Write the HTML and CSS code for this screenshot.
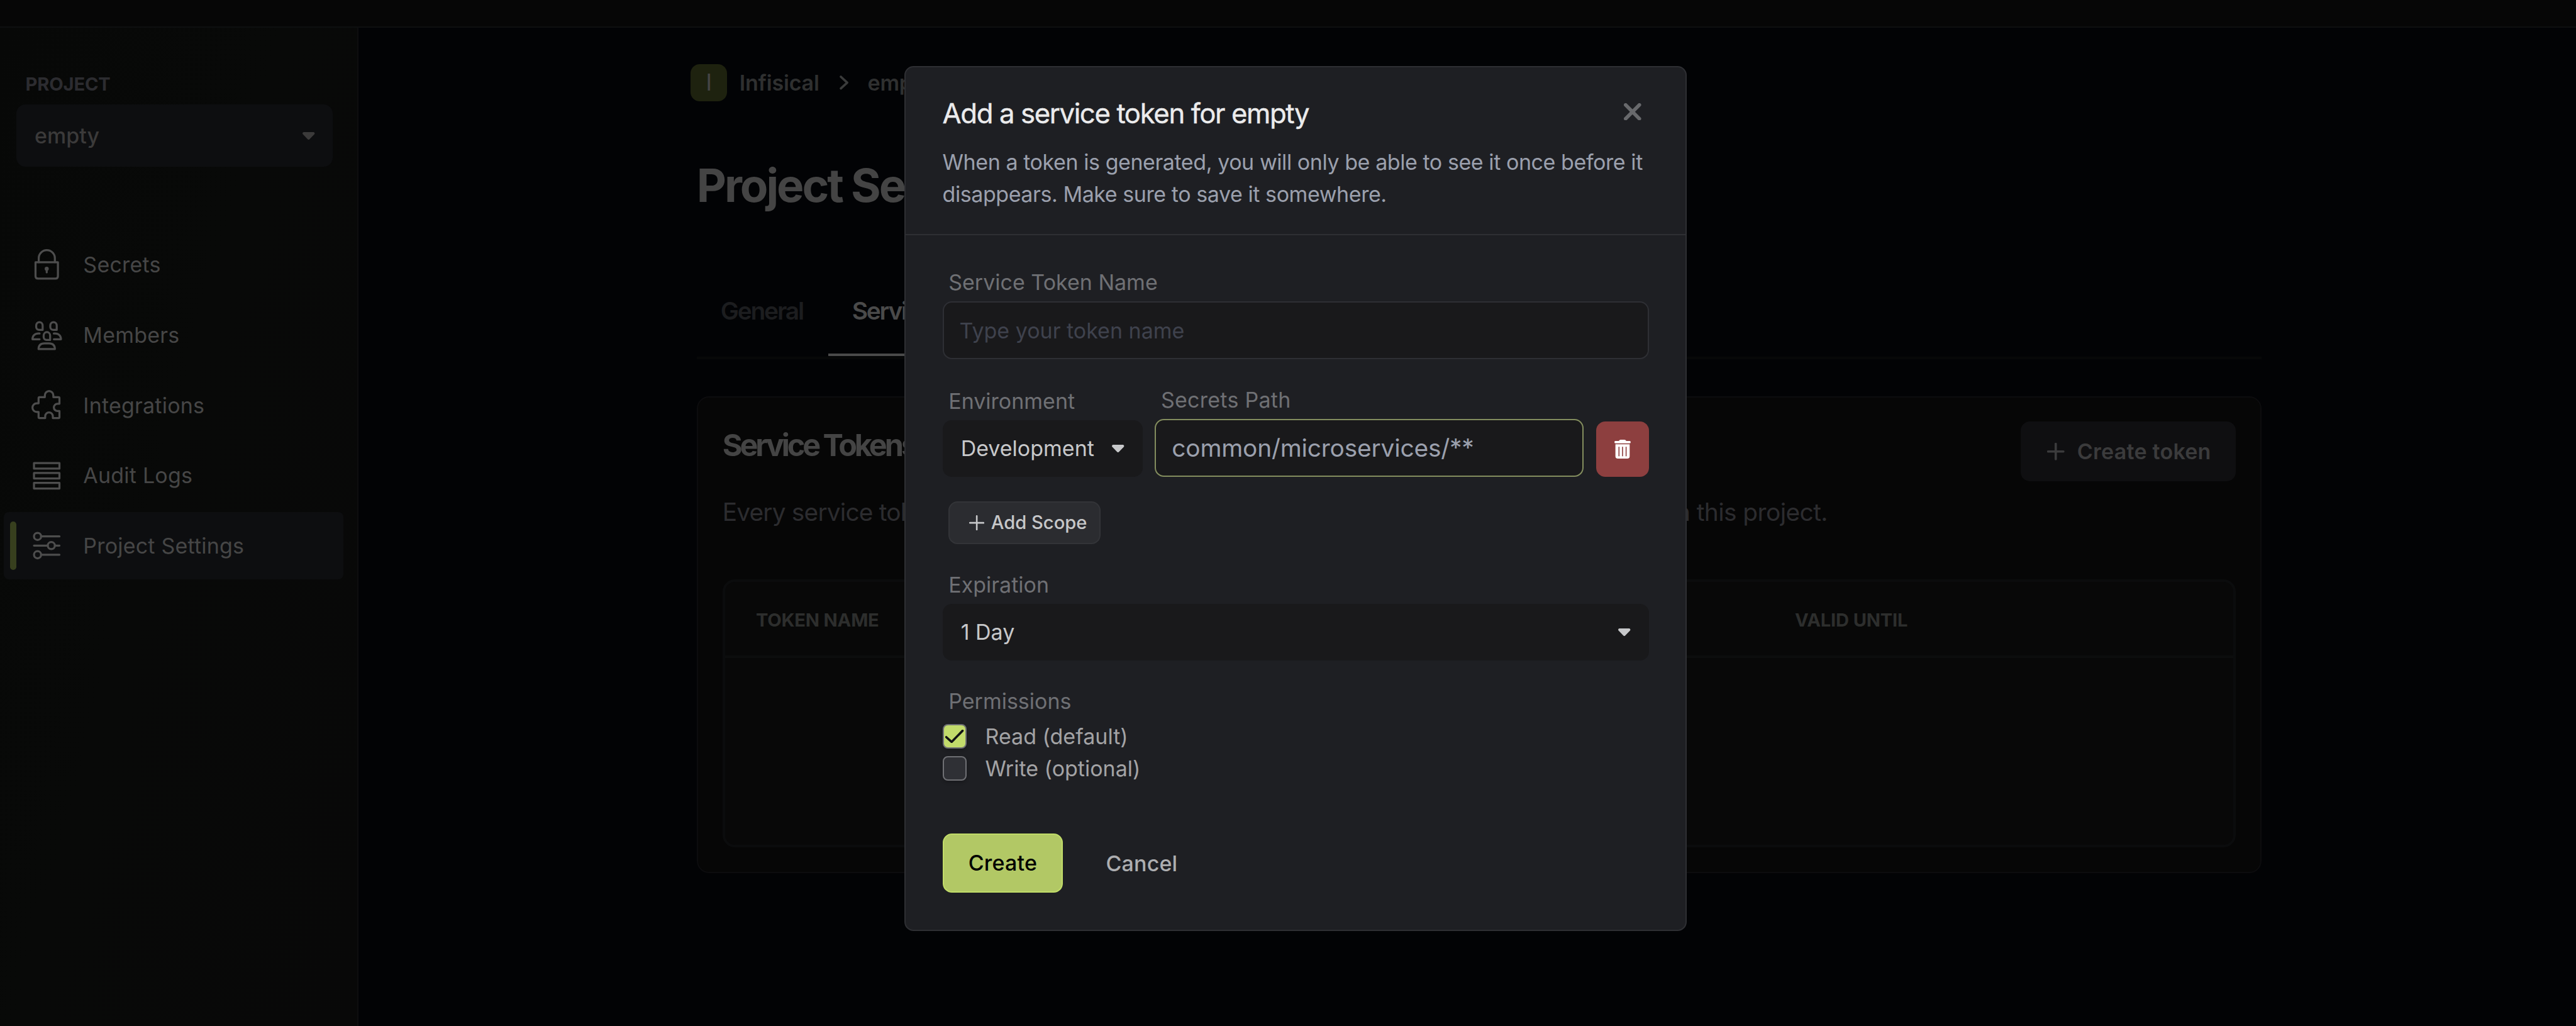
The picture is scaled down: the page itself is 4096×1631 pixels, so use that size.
FILE: index.html
```html
<!DOCTYPE html>
<html lang="en">
<head>
<meta charset="utf-8">
<title>Project Settings</title>
<link rel="stylesheet" href="styles.css">
</head>
<body>
<div class="app">
  <header class="topbar"></header>
  <div class="shell">
    <aside class="sidebar">
      <div class="sidebar-label">PROJECT</div>
      <div class="project-select">
        <span>empty</span>
        <svg class="caret" viewBox="0 0 24 15"><path d="M2.2 0h19.6q2.2.4 2.2 2.6 0 1-.8 1.8l-9.6 9.8q-1.6 1.5-3.2 0L.8 4.400Q0 3.600 0 2.600 0 .4 2.200 0z"/></svg>
      </div>
      <nav class="menu">
        <a class="menu-item">
          <svg class="menu-icon" viewBox="0 0 180 180"><path d="M24 77h132v82q0 15-15 15H39q-15 0-15-15z"/><path d="M43 77V53.500a47.500 47.500 0 0 1 95 0V77"/><path d="M90 118v19"/><circle class="solid" cx="90" cy="116" r="6"/></svg>
          <span>Secrets</span>
        </a>
        <a class="menu-item">
          <svg class="menu-icon" viewBox="0 0 180 180"><path d="M28 36a19 21 0 0 1 38 0v25H45a17 17 0 0 1-17-17z"/><path d="M111 36a19 21 0 0 1 38 0v25h-21a17 17 0 0 1-17-17z"/><path d="M72 95a19 21 0 0 1 38 0v25H89a17 17 0 0 1-17-17z"/><path d="M48 82h-8C20 82 6 96 6 116h42"/><path d="M132 82h8c20 0 34 14 34 34h-42"/><path d="M42 174c0-22 12-34 34-34h28c22 0 34 12 34 34z"/></svg>
          <span>Members</span>
        </a>
        <a class="menu-item">
          <svg class="menu-icon" viewBox="0 0 180 180"><path d="M42 78V48q0-6 6-6h31V31.500a25 25.500 0 0 1 50 0V42h30q6 0 6 6v33h-11a22 21.500 0 0 0 0 43h11v35q0 6-6 6h-33v-10.500a22.500 22.500 0 0 0-45 0V165H48q-6 0-6-6v-30H31.500a25.500 25.500 0 0 1 0-51z"/></svg>
          <span>Integrations</span>
        </a>
        <a class="menu-item">
          <svg class="menu-icon" viewBox="0 0 180 180"><path d="M15 15h150v33H15zM15 74h150v32H15zM15 132h150v33H15z"/></svg>
          <span>Audit Logs</span>
        </a>
        <a class="menu-item active">
          <svg class="menu-icon" viewBox="0 0 180 180"><circle cx="36" cy="36" r="21"/><path d="M57 36h108M15 90h81M138 90h27M57 144h108"/><circle cx="117" cy="90" r="21"/><circle cx="36" cy="144" r="21"/></svg>
          <span>Project Settings</span>
        </a>
      </nav>
    </aside>
    <main class="content">
      <div class="breadcrumb">
        <span class="org-badge">I</span>
        <span class="crumb">Infisical</span>
        <svg class="crumb-arrow" viewBox="0 0 18 28"><path d="M2.500 2.500 15 14 2.500 25.500"/></svg>
        <span class="crumb">empty</span>
      </div>
      <h1 class="page-title">Project Settings</h1>
      <div class="tabs">
        <span class="tab">General</span>
        <span class="tab selected">Service Tokens</span>
      </div>
      <section class="card">
        <div class="card-head">
          <h2 class="card-title">Service Tokens</h2>
          <div class="create-token">
            <svg class="plus-lg" viewBox="0 0 34 34"><path d="M17 2v30M2 17h30"/></svg>
            <span>Create token</span>
          </div>
        </div>
        <p class="card-text"><span class="tight">Every service token</span><span>in this project.</span></p>
        <div class="table">
          <div class="table-head">
            <span class="col-name">TOKEN NAME</span>
            <span>VALID UNTIL</span>
          </div>
        </div>
      </section>
    </main>
  </div>
</div>

<div class="modal" role="dialog">
  <div class="modal-head">
    <div class="modal-title-row">
      <h3 class="modal-title">Add a service token for empty</h3>
      <svg class="close" viewBox="0 0 34 34"><path d="M3.500 3.500l27 27M30.500 3.500l-27 27"/></svg>
    </div>
    <p class="modal-text">When a token is generated, you will only be able to see it once before it<br>disappears. Make sure to save it somewhere.</p>
  </div>
  <div class="modal-body">
    <div class="field">
      <label class="label">Service Token Name</label>
      <div class="input placeholder">Type your token name</div>
    </div>
    <div class="scope-row">
      <div class="field env">
        <label class="label">Environment</label>
        <div class="select">
          <span>Development</span>
          <svg class="caret" viewBox="0 0 24 15"><path d="M2.2 0h19.6q2.2.4 2.2 2.6 0 1-.8 1.8l-9.6 9.8q-1.6 1.5-3.2 0L.8 4.400Q0 3.600 0 2.600 0 .4 2.200 0z"/></svg>
        </div>
      </div>
      <div class="field path">
        <label class="label">Secrets Path</label>
        <div class="input focused">common/microservices/**</div>
      </div>
      <div class="trash">
        <svg class="trash-icon" viewBox="0 0 96 111"><path d="M6 7h20q4-7 11-7h22q7 0 11 7h20q6 0 6 7t-6 7H6q-6 0-6-7t6-7z"/><path fill-rule="evenodd" d="M6 27h84v70q0 14-14 14H20Q6 111 6 97zM24 44v51q0 3 3 3t3-3V44q0-3-3-3t-3 3zM45 44v51q0 3 3 3t3-3V44q0-3-3-3t-3 3zM66 44v51q0 3 3 3t3-3V44q0-3-3-3t-3 3z"/></svg>
      </div>
    </div>
    <div class="add-scope">
      <svg class="plus-sm" viewBox="0 0 30 30"><path d="M15 1.500v27M1.500 15h27"/></svg>
      <span>Add Scope</span>
    </div>
    <div class="field expiration">
      <label class="label">Expiration</label>
      <div class="select">
        <span>1 Day</span>
        <svg class="caret" viewBox="0 0 24 15"><path d="M2.2 0h19.6q2.2.4 2.2 2.6 0 1-.8 1.8l-9.6 9.8q-1.6 1.5-3.2 0L.8 4.400Q0 3.600 0 2.600 0 .4 2.200 0z"/></svg>
      </div>
    </div>
    <div class="field permissions">
      <label class="label">Permissions</label>
      <div class="check-row">
        <span class="checkbox checked"><svg viewBox="0 0 36 26"><path d="M2 14.500 12.500 24 34 2"/></svg></span>
        <span>Read (default)</span>
      </div>
      <div class="check-row">
        <span class="checkbox"></span>
        <span>Write (optional)</span>
      </div>
    </div>
    <div class="actions">
      <div class="btn-create">Create</div>
      <div class="btn-cancel">Cancel</div>
    </div>
  </div>
</div>
</body>
</html>
```
FILE: styles.css
```css
* {
  box-sizing: border-box;
}

html {
  font-size: 80.981px;
}

body {
  margin: 0;
  width: 100vw;
  height: 100vh;
  overflow: hidden;
  position: relative;
  background: #020305;
  font-family: Inter, "Liberation Sans", sans-serif;
  font-size: .42rem;
  line-height: .63rem;
  white-space: nowrap;
}

h1, h2, h3, p {
  margin: 0;
}

svg {
  display: block;
  flex: none;
}

.app {
  height: 100%;
  display: flex;
  flex-direction: column;
}

.topbar {
  height: .545rem;
  flex: none;
  background: #060606;
  border-bottom: .03rem solid #0e0f10;
}

.shell {
  flex: 1;
  display: flex;
}

/* Sidebar */
.sidebar {
  width: 7.04rem;
  flex: none;
  background: linear-gradient(105deg, #070807 0%, #080908 45%, #080808 100%);
  border-right: .03rem solid #0e0e0f;
}

.sidebar-label {
  margin: .84rem 0 0 .5rem;
  line-height: .54rem;
  font-size: .36rem;
  font-weight: 700;
  letter-spacing: -.005em;
  color: #2c2c30;
}

.project-select {
  margin: .12rem .48rem 0 .32rem;
  height: 1.23rem;
  padding: .01rem .35rem 0 .36rem;
  border-radius: .18rem;
  background: #0d0e10;
  color: #3b3a3a;
  font-weight: 500;
  display: flex;
  align-items: center;
  justify-content: space-between;
}

.caret {
  width: .24rem;
  height: .15rem;
  fill: currentColor;
}

.menu {
  margin: 1.26rem .27rem 0 .08rem;
  display: flex;
  flex-direction: column;
  gap: .06rem;
}

.menu-item {
  height: 1.32rem;
  padding-left: .54rem;
  border-radius: .1rem;
  display: flex;
  align-items: center;
  gap: .415rem;
  color: #464646;
  letter-spacing: .006em;
}

.menu-item.active {
  padding-left: .12rem;
  background: #0d0e10;
}

.menu-item.active::before {
  content: "";
  width: .12rem;
  height: .96rem;
  margin-right: -.115rem;
  border-radius: .06rem;
  background: #373f1e;
}

.menu-icon {
  width: .6rem;
  height: .6rem;
  fill: none;
  stroke: #4d4d4d;
  stroke-width: 12;
  stroke-linecap: round;
  stroke-linejoin: round;
}

.menu-icon .solid {
  fill: #4d4d4d;
}

/* Page behind the dialog */
.content {
  flex: 1;
  padding: .72rem 6.18rem 0 6.64rem;
  background: #020305;
}

.breadcrumb {
  margin-left: -.12rem;
  height: .72rem;
  display: flex;
  align-items: center;
  color: #2f3030;
  font-weight: 600;
}

.org-badge {
  width: .72rem;
  height: .72rem;
  line-height: .72rem;
  margin-right: .24rem;
  border-radius: .18rem;
  background: #1e220f;
  color: #444;
  font-size: .46rem;
  font-weight: 400;
  text-align: center;
}

.crumb {
  letter-spacing: -.006em;
}

.crumb-arrow {
  width: .18rem;
  height: .28rem;
  margin: 0 .37rem 0 .4rem;
  fill: none;
  stroke: #3a3b3b;
  stroke-width: 4.500;
  stroke-linecap: round;
  stroke-linejoin: round;
}

.page-title {
  margin-top: 1.11rem;
  line-height: 1.08rem;
  font-size: .9rem;
  font-weight: 700;
  letter-spacing: -.042em;
  color: #444;
}

.tabs {
  margin-top: 1.02rem;
  height: 1.86rem;
  border-bottom: .06rem solid #070808;
  display: flex;
}

.tab {
  padding: 0 .47rem;
  line-height: 1.81rem;
  font-size: .48rem;
  font-weight: 600;
  letter-spacing: -.0565em;
  color: #1c1d1f;
}

.tab:first-child {
  width: 2.58rem;
}

.tab.selected {
  border-bottom: .06rem solid #4a4a4a;
  color: #4a4a4a;
  height: 1.8rem;
}

.card {
  margin-top: .72rem;
  height: 9.36rem;
  padding: .48rem;
  border: .03rem solid #0c0c0e;
  border-radius: .24rem;
  background: #060606;
  display: flex;
  flex-direction: column;
}

.card-head {
  display: flex;
  justify-content: space-between;
  align-items: flex-start;
}

.card-title {
  margin-top: .05rem;
  line-height: .84rem;
  font-size: .6rem;
  font-weight: 700;
  letter-spacing: -.084em;
  color: #444;
}

.create-token {
  width: 4.22rem;
  height: 1.17rem;
  padding-left: .52rem;
  border-radius: .18rem;
  background: #0f0f11;
  color: #3b3b3c;
  font-weight: 600;
  letter-spacing: .007em;
  display: flex;
  align-items: center;
  gap: .25rem;
}

.plus-lg,
.plus-sm {
  fill: none;
  stroke: currentColor;
  stroke-linecap: round;
}

.plus-lg {
  width: .34rem;
  height: .34rem;
  stroke-width: 4.500;
}

.card-text {
  width: 21.700rem;
  margin-top: .25rem;
  line-height: .72rem;
  font-size: .48rem;
  letter-spacing: -.015em;
  color: #2c2c2f;
  display: flex;
  justify-content: space-between;
}

.card-text .tight {
  letter-spacing: -.021em;
}

.table {
  margin-top: .95rem;
  flex: 1;
  border: .06rem solid #0b0c0d;
  border-radius: .24rem;
  background: #080808;
  overflow: hidden;
}

.table-head {
  height: 1.5rem;
  padding-left: .61rem;
  line-height: 1.510rem;
  border-bottom: .06rem solid #0c0d0d;
  font-size: .36rem;
  font-weight: 700;
  letter-spacing: -.007em;
  color: #2d2e2d;
  display: flex;
}

.col-name {
  width: 20.400rem;
}

/* Dialog */
.modal {
  position: absolute;
  left: 17.760rem;
  top: 1.295rem;
  width: 15.360rem;
  height: 16.980rem;
  border: .03rem solid #2e2f33;
  border-radius: .18rem;
  background: #1e1f23;
}

.modal-head {
  height: 3.300rem;
  padding: .54rem .72rem 0;
  border-bottom: .03rem solid #2e2f33;
}

.modal-title-row {
  display: flex;
  justify-content: space-between;
}

.modal-title {
  line-height: .74rem;
  font-size: .54rem;
  font-weight: 400;
  -webkit-text-stroke: .005rem #ebebec;
  letter-spacing: -.032em;
  color: #ebebec;
}

.close {
  width: .34rem;
  height: .34rem;
  margin: .16rem .150rem 0 0;
  fill: none;
  stroke: #68696c;
  stroke-width: 7;
  stroke-linecap: round;
}

.modal-text {
  margin-top: .26rem;
  letter-spacing: -.0127em;
  color: #9ba0ad;
}

.modal-body {
  padding: .6rem .72rem 0;
}

.field {
  display: flex;
  flex-direction: column;
}

.label {
  padding-left: .12rem;
  margin-bottom: .06rem;
  color: #6f7074;
}

.input {
  height: 1.140rem;
  padding: .02rem .32rem 0 .31rem;
  border: .03rem solid #2e2f34;
  border-radius: .18rem;
  background: #19191b;
  display: flex;
  align-items: center;
}

.input.placeholder {
  color: #3f424d;
}

.input.focused {
  padding-top: 0;
  border-color: #838d5e;
  font-size: .48rem;
  letter-spacing: -.005em;
  color: #9ba0ad;
}

.scope-row {
  margin-top: .48rem;
  display: flex;
  align-items: flex-end;
  gap: .24rem;
}

.env {
  width: 3.930rem;
}

.path {
  flex: 1;
}

.path .label {
  letter-spacing: .008em;
}

.select {
  height: 1.110rem;
  padding: 0 .36rem;
  border-radius: .18rem;
  background: #19191b;
  color: #c7c8ca;
  display: flex;
  align-items: center;
  justify-content: space-between;
}

.trash {
  width: 1.040rem;
  height: 1.090rem;
  border-radius: .18rem;
  background: #8d3f3f;
  display: flex;
  align-items: center;
  justify-content: center;
}

.trash-icon {
  width: .32rem;
  height: .37rem;
  fill: #fff;
}

.add-scope {
  width: 2.980rem;
  height: .84rem;
  margin: .48rem 0 0 .12rem;
  padding-left: .38rem;
  border: .03rem solid #333438;
  border-radius: .18rem;
  background: #2b2c30;
  color: #c6c7c9;
  font-size: .36rem;
  font-weight: 500;
  display: flex;
  align-items: center;
  gap: .13rem;
}

.plus-sm {
  width: .3rem;
  height: .3rem;
  stroke-width: 3.200;
}

.expiration,
.permissions {
  margin-top: .485rem;
}

.check-row {
  height: .63rem;
  display: flex;
  align-items: center;
  gap: .36rem;
  color: #a3a3a5;
}

.checkbox {
  width: .48rem;
  height: .48rem;
  border: .03rem solid #6f7074;
  border-radius: .1rem;
  background: #2f3035;
  box-shadow: 0 .03rem .06rem rgba(0, 0, 0, .2);
  display: flex;
  align-items: center;
  justify-content: center;
}

.checkbox.checked {
  background: #c2db6b;
}

.checkbox svg {
  width: .36rem;
  height: .26rem;
  fill: none;
  stroke: #111214;
  stroke-width: 4.500;
  stroke-linecap: round;
  stroke-linejoin: round;
}

.actions {
  margin-top: .96rem;
  display: flex;
  align-items: center;
  font-weight: 500;
}

.btn-create {
  width: 2.370rem;
  height: 1.170rem;
  line-height: 1.120rem;
  border: .03rem solid #c1dc68;
  border-radius: .18rem;
  background: #b2c865;
  color: #000;
  letter-spacing: .006em;
  text-align: center;
}

.btn-cancel {
  margin-left: .84rem;
  letter-spacing: .005em;
  color: #adaeb0;
}
```
